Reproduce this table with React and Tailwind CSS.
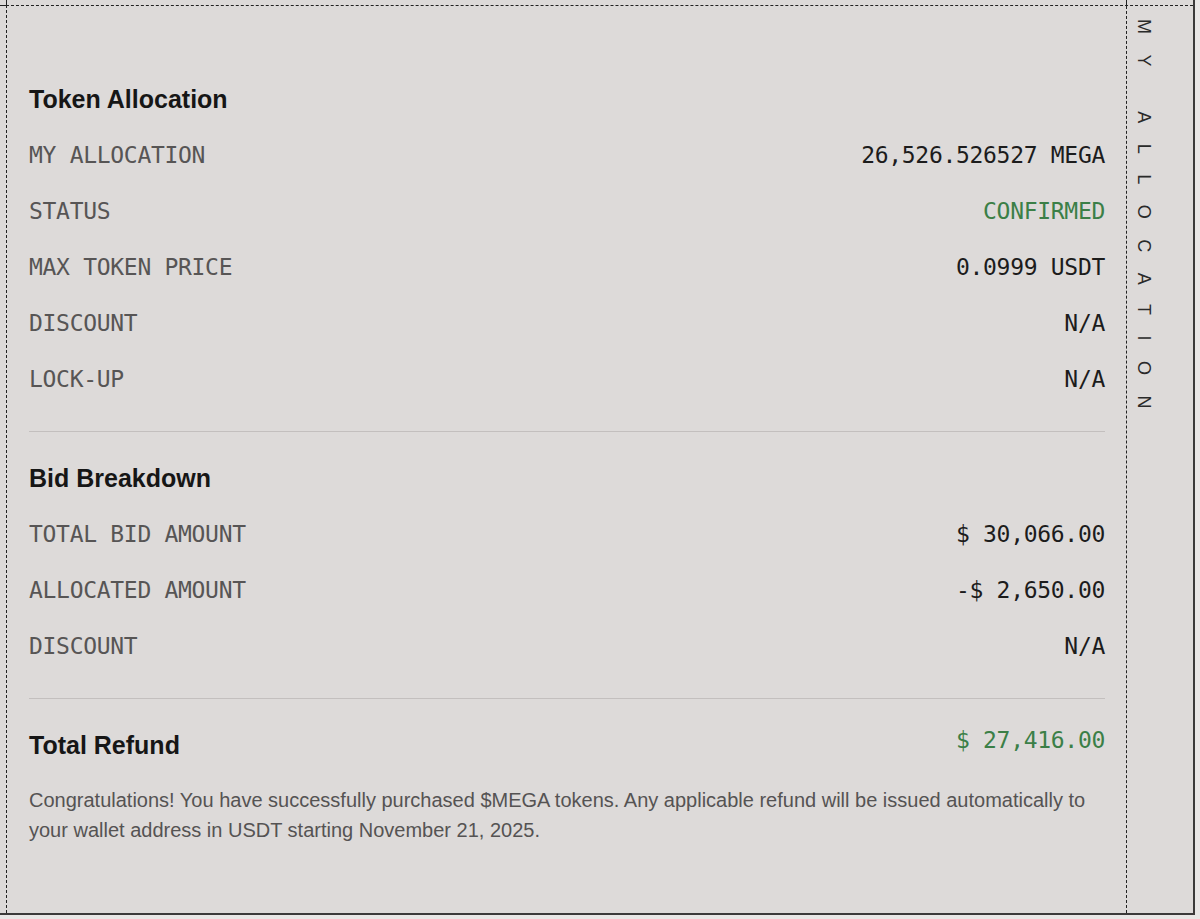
import React from 'react';

const allocationRows = [
  { label: 'MY ALLOCATION', value: '26,526.526527 MEGA' },
  { label: 'STATUS', value: 'CONFIRMED', green: true },
  { label: 'MAX TOKEN PRICE', value: '0.0999 USDT' },
  { label: 'DISCOUNT', value: 'N/A' },
  { label: 'LOCK-UP', value: 'N/A' },
];

const bidRows = [
  { label: 'TOTAL BID AMOUNT', value: '$ 30,066.00' },
  { label: 'ALLOCATED AMOUNT', value: '-$ 2,650.00' },
  { label: 'DISCOUNT', value: 'N/A' },
];

function Row({ label, value, green }) {
  return (
    <div className="flex justify-between items-center h-[56px] font-['DejaVu_Sans_Mono',monospace] text-[23px] tracking-[-0.3px]">
      <span className="text-[#575555]">{label}</span>
      <span className={green ? 'text-[#3b7f47]' : 'text-[#1c1c1c]'}>{value}</span>
    </div>
  );
}

function Heading({ children }) {
  return (
    <h2 className="font-['Liberation_Sans',Arial,sans-serif] font-bold text-[25px] leading-[32px] text-[#161616]">
      {children}
    </h2>
  );
}

export default function App() {
  return (
    <div className="min-h-screen bg-[#e9e7e6]">
      <div className="relative w-[1195px] h-[915px] bg-[#dddad9] border-r-2 border-b-2 border-[#3c3a3a] pt-[5px] pl-[6px] flex">
        {/* dashed stubs where the grid lines run off the edge */}
        <div className="absolute left-0 top-[5px] w-[6px] border-t border-dashed border-[#222]" />
        <div className="absolute left-[6px] top-0 h-[5px] border-l border-dashed border-[#222]" />
        <div className="absolute left-[1126px] top-0 h-[5px] border-l border-dashed border-[#222]" />

        <div className="flex flex-1 border-t border-l border-dashed border-[#222]">
          {/* main column */}
          <div className="w-[1119px] pl-[22px] pr-[21px] pt-[77px]">
            <Heading>Token Allocation</Heading>
            <div className="mt-[12px]">
              {allocationRows.map((r) => (
                <Row key={r.label} {...r} />
              ))}
            </div>
            <div className="mt-[24px] h-px bg-[#c3bfbe]" />

            <div className="mt-[30px]">
              <Heading>Bid Breakdown</Heading>
            </div>
            <div className="mt-[12px]">
              {bidRows.map((r) => (
                <Row key={r.label} {...r} />
              ))}
            </div>
            <div className="mt-[24px] h-px bg-[#c3bfbe]" />

            <div className="mt-[30px] flex justify-between items-start">
              <Heading>Total Refund</Heading>
              <span className="font-['DejaVu_Sans_Mono',monospace] text-[23px] tracking-[-0.3px] leading-[22px] text-[#3b7f47]">
                $ 27,416.00
              </span>
            </div>
            <p className="mt-[24px] font-['Liberation_Sans',Arial,sans-serif] text-[20px] leading-[30px] text-[#555353]">
              Congratulations! You have successfully purchased $MEGA tokens. Any applicable refund will be issued automatically to your wallet address in USDT starting November 21, 2025.
            </p>
          </div>

          {/* side tab */}
          <div className="flex-1 border-l border-dashed border-[#222] pl-[6px] pt-[13px]">
            <span className="[writing-mode:vertical-rl] font-['Liberation_Sans',Arial,sans-serif] font-light text-[18px] leading-[22px] tracking-[20.5px] text-[#2a2a2a]">
              MY ALLOCATION
            </span>
          </div>
        </div>
      </div>
    </div>
  );
}
